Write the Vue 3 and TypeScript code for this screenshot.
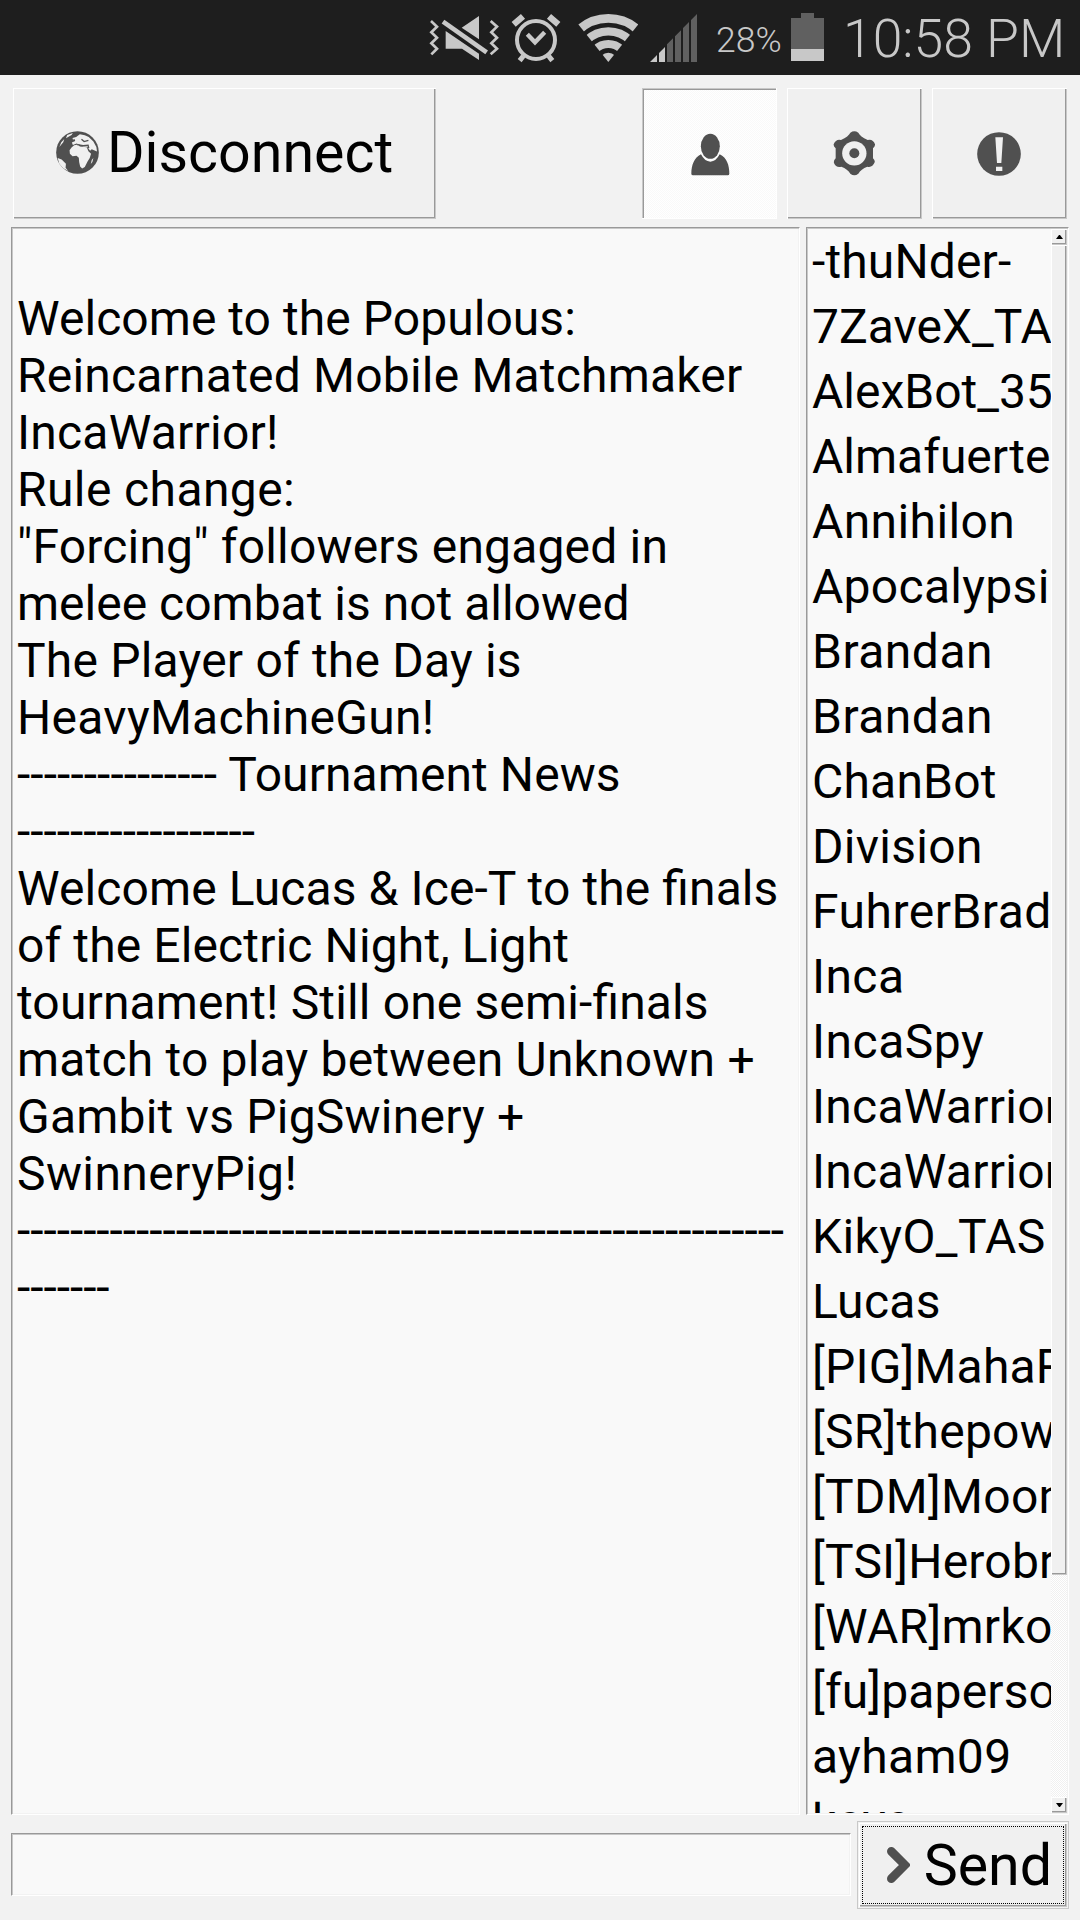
<script setup lang="ts">
interface Line {
  text: string
  spacing: number
}

const lines: Line[] = [
  { text: '\u00a0', spacing: 0 },
  { text: 'Welcome to the Populous:', spacing: 0.05 },
  { text: 'Reincarnated Mobile Matchmaker', spacing: 0.2 },
  { text: 'IncaWarrior!', spacing: 0.22 },
  { text: 'Rule change:', spacing: 0.4 },
  { text: '"Forcing" followers engaged in', spacing: 0.17 },
  { text: 'melee combat is not allowed', spacing: 0 },
  { text: 'The Player of the Day is', spacing: 0.2 },
  { text: 'HeavyMachineGun!', spacing: 0.3 },
  { text: '--------------- Tournament News', spacing: 0.08 },
  { text: '------------------', spacing: -0.04 },
  { text: 'Welcome Lucas & Ice-T to the finals', spacing: 0.1 },
  { text: 'of the Electric Night, Light', spacing: 0.12 },
  { text: 'tournament! Still one semi-finals', spacing: 0.14 },
  { text: 'match to play between Unknown +', spacing: 0.19 },
  { text: 'Gambit vs PigSwinery +', spacing: 0.22 },
  { text: 'SwinneryPig!', spacing: 0.4 },
  { text: '-'.repeat(58), spacing: -0.04 },
  { text: '-------', spacing: -0.04 },
]

const users: Line[] = [
  { text: '-thuNder-', spacing: 0.13 },
  { text: '7ZaveX_TAS', spacing: 0 },
  { text: 'AlexBot_35', spacing: 0 },
  { text: 'Almafuerte', spacing: 0 },
  { text: 'Annihilon', spacing: 0.4 },
  { text: 'Apocalypsis', spacing: 0.3 },
  { text: 'Brandan', spacing: 0.5 },
  { text: 'Brandan', spacing: 0.5 },
  { text: 'ChanBot', spacing: 0.2 },
  { text: 'Division', spacing: 0.3 },
  { text: 'FuhrerBrad', spacing: 0.5 },
  { text: 'Inca', spacing: 0.4 },
  { text: 'IncaSpy', spacing: 0.5 },
  { text: 'IncaWarrior', spacing: 0.25 },
  { text: 'IncaWarrior', spacing: 0.25 },
  { text: 'KikyO_TAS', spacing: 0.4 },
  { text: 'Lucas', spacing: 0.3 },
  { text: '[PIG]MahaR', spacing: 0.2 },
  { text: '[SR]thepower', spacing: 0.25 },
  { text: '[TDM]Moon', spacing: 0.3 },
  { text: '[TSI]Herobrine', spacing: 0.2 },
  { text: '[WAR]mrko', spacing: 0.3 },
  { text: '[fu]paperso', spacing: 0.15 },
  { text: 'ayham09', spacing: 0.35 },
  { text: 'kaya', spacing: 0.3 },
]
</script>

<template>
  <div class="screen">
    <header class="status">
      <svg class="mute" viewBox="24 30 216 165" width="72" height="55">
        <g fill="none" stroke="#c8c8c8" stroke-width="8">
          <path d="M33 63L51 80L34 97L51 113L34 130L51 146L34 163" />
          <path d="M212 63L231 80L214 97L231 113L214 130L231 146L212 163" />
        </g>
        <path d="M177 48V118L125 83ZM77 93L177 161V180L126 146H77Z" fill="#c8c8c8" />
        <path d="M69 65L200 157" stroke="#c8c8c8" stroke-width="14" />
      </svg>
      <svg class="alarm" viewBox="270 30 156 165" width="52" height="55">
        <g fill="none" stroke="#c8c8c8">
          <circle cx="348" cy="120" r="57" stroke-width="12" />
          <path d="M322 103L345 127L374 97" stroke-width="13" />
          <path d="M281 73L309 49M387 49L415 73" stroke-width="19" />
          <path d="M310 168L299 182M386 168L397 182" stroke-width="15" />
        </g>
      </svg>
      <svg class="wifi" viewBox="474 30 180 165" width="60" height="55">
        <clipPath id="wedge"><path d="M565 186L434 22H696Z" /></clipPath>
        <g clip-path="url(#wedge)" fill="none" stroke="#c8c8c8">
          <circle cx="565" cy="186" r="131" stroke-width="26" />
          <circle cx="565" cy="186" r="92" stroke-width="25" />
          <circle cx="565" cy="186" r="54" stroke-width="24" />
          <circle cx="565" cy="186" r="14" stroke-width="28" />
        </g>
      </svg>
      <svg class="signal" viewBox="687 30 147 165" width="49" height="55">
        <path d="M690 186L711 165V186ZM717 159L735 141V186H717Z" fill="#c8c8c8" />
        <path d="M741 133L759 115V186H741ZM765 109L783 91V186H765ZM789 84L807 66V186H789ZM813 60L831 42V186H813Z" fill="#606060" />
      </svg>
      <span class="percent">28%</span>
      <span class="battery"><i class="cap"></i><i class="cell"></i></span>
      <span class="clock">10:58 PM</span>
    </header>

    <nav class="toolbar">
      <button class="raised disconnect">
        <svg viewBox="0 0 130 130" width="43" height="43">
          <circle cx="65" cy="65" r="64.5" fill="#505050" />
          <g fill="#f0f0f0">
            <path d="M61 18L72 10L87 13L99 18L113 32L122 48L124 62L115 58L108 55L103 60L95 48L82 47L70 41L62 38L51 42L48 35L58 30L57 25L51 26L50 21Z" />
            <path d="M55 43L67 41L72 47L93 49L98 61L106 69L102 82L95 93L87 109L79 113L73 107L70 94L69 81L62 75L50 76L42 69L41 58L47 50Z" />
            <path d="M34 12L51 6L47 12L30 22ZM16 34L25 24L22 34L10 48ZM5 82L17 86L30 99L29 111L37 121L21 112L10 99Z" />
            <path d="M108 88L113 82L110 94L105 100Z" />
          </g>
          <path d="M64 41L82 44L97 43L99 52M77 25L85 32L98 28" fill="none" stroke="#505050" stroke-width="4" />
        </svg>
        <span>Disconnect</span>
      </button>
      <div class="group">
        <button class="pressed square">
          <svg viewBox="0 0 133 133" width="44.33" height="44.33">
            <ellipse cx="67" cy="46" rx="28.5" ry="37.5" fill="#505050" />
            <path d="M39 70Q50 92 67 92T95 70C117 80 124 104 124 128Q124 133 119 133H15Q10 133 10 128C10 104 18 80 39 70Z" fill="#505050" />
          </svg>
        </button>
        <button class="raised square">
          <svg viewBox="0 0 134 134" width="44.67" height="44.67">
            <path d="M55 5Q67-3 79 5Q84 16 107 27Q123 23 129 40Q130 46 123 52V82Q130 90 128 94Q121 111 106 107Q87 114 79 128Q67 138 55 128Q47 114 28 107Q12 111 6 96Q4 89 11 82V52Q4 46 5 40Q12 23 27 27Q50 16 55 5Z" fill="#505050" />
            <circle cx="67" cy="67" r="36.500" fill="#f0f0f0" />
            <circle cx="67" cy="67" r="15" fill="#505050" />
          </svg>
        </button>
        <button class="raised square alert">
          <svg viewBox="0 0 132 132" width="44" height="44">
            <circle cx="66" cy="66" r="65.500" fill="#505050" />
            <path d="M55 16H78L73 93H60ZM57 104H76V117H57Z" fill="#f0f0f0" />
          </svg>
        </button>
      </div>
    </nav>

    <main class="body">
      <section class="sunken chat">
        <div v-for="(line, i) in lines" :key="i" class="line" :style="{ letterSpacing: line.spacing + 'px' }">{{ line.text }}</div>
      </section>
      <section class="sunken users">
        <ul class="names">
          <li v-for="(user, i) in users" :key="i" :style="{ letterSpacing: user.spacing + 'px' }">{{ user.text }}</li>
        </ul>
        <div class="scrollbar">
          <div class="raised arrow"><svg viewBox="0 0 7 4" width="7" height="4"><path d="M0 4L3 0H4L7 4Z" /></svg></div>
          <div class="raised thumb"></div>
          <div class="track"></div>
          <div class="raised arrow"><svg viewBox="0 0 7 4" width="7" height="4"><path d="M0 0L3 4H4L7 0Z" /></svg></div>
        </div>
      </section>
    </main>

    <footer class="compose">
      <div class="sunken entry"></div>
      <button class="send">
        <span class="raised face">
          <span class="focus">
            <svg viewBox="0 0 68 108" width="22.67" height="36"><path d="M13 13L54 54L13 95" fill="none" stroke="#505050" stroke-width="26" stroke-linecap="round" /></svg>
            <span>Send</span>
          </span>
        </span>
      </button>
    </footer>
  </div>
</template>

<style>
body {
  margin: 0;
}
</style>

<style scoped>
.screen {
  width: 1080px;
  height: 1920px;
  box-sizing: border-box;
  overflow: hidden;
  display: flex;
  flex-direction: column;
  background: #f2f2f2;
  color: #000;
  font-family: Roboto, sans-serif;
  font-size: 48px;
}
.screen * {
  box-sizing: border-box;
}
svg {
  display: block;
  flex: none;
}
button {
  padding: 0;
  border: 0;
  border-radius: 0;
  font: inherit;
  color: inherit;
}
.status {
  height: 75px;
  flex: none;
  display: flex;
  align-items: flex-start;
  padding: 10px 0 0 428px;
  background: #1e1e1e;
  color: #c8c8c8;
  white-space: nowrap;
}
.alarm {
  margin-left: 10px;
}
.wifi {
  margin-left: 16px;
}
.signal {
  margin-left: 11px;
}
.percent {
  width: 75px;
  margin-left: 18px;
  font-size: 35.5px;
  font-weight: 350;
  line-height: 60px;
}
.battery {
  width: 33px;
  margin-top: 3px;
  display: flex;
  flex-direction: column;
  align-items: center;
}
.cap {
  width: 13px;
  height: 5px;
  background: #606060;
}
.cell {
  width: 33px;
  height: 43px;
  background: linear-gradient(#606060 31px, #c8c8c8 31px);
}
.clock {
  margin-left: 19px;
  font-size: 53.5px;
  font-weight: 300;
  line-height: 57px;
}
.raised {
  background: #f0f0f0;
  box-shadow: inset 1px 1px #fff, inset -1px -1px #c8c8c8, inset -2px -2px #999;
}
.pressed {
  background: repeating-conic-gradient(#fff 0 25%, #f9f9f9 0 50%) 0 0 / 2px 2px;
  box-shadow: inset -1px -1px #fff, inset 1px 1px #c8c8c8, inset 2px 2px #999;
}
.sunken {
  border: 1px solid;
  border-color: #999 #fff #fff #999;
  background: #f9f9f9;
  box-shadow: inset 1px 1px #c8c8c8, inset -1px -1px #f2f2f2;
}
.toolbar {
  flex: none;
  height: 152px;
  display: flex;
  justify-content: space-between;
  padding: 13px 13px 8px;
}
.disconnect {
  width: 423px;
  display: flex;
  align-items: center;
  padding-left: 43px;
  padding-bottom: 2px;
  font-size: 57.3px;
}
.disconnect span {
  margin-left: 8px;
}
.group {
  display: flex;
  gap: 10px;
}
.square {
  width: 135px;
  display: flex;
  align-items: center;
  justify-content: center;
}
.square.pressed {
  padding-left: 2px;
}
.square.alert {
  padding-right: 2px;
}
.body {
  flex: none;
  height: 1588px;
  display: flex;
  gap: 6px;
  padding: 0 11px;
}
.chat {
  width: 789px;
  padding: 5px 0 0 5px;
}
.line {
  height: 57px;
  line-height: 57px;
  white-space: pre;
  font-feature-settings: "liga" 1;
}
.users {
  width: 263px;
  display: flex;
  padding: 1px;
}
.names {
  width: 243px;
  margin: 0;
  padding: 0 0 0 4px;
  overflow: hidden;
  list-style: none;
  line-height: 65px;
  white-space: nowrap;
}
.names li {
  height: 65px;
}
.scrollbar {
  width: 16px;
  display: flex;
  flex-direction: column;
}
.arrow {
  height: 16px;
  display: flex;
  align-items: center;
  justify-content: center;
}
.thumb {
  height: 1330px;
}
.track {
  flex: 1;
  background: repeating-conic-gradient(#fff 0 25%, #f0f0f0 0 50%) 0 0 / 2px 2px;
}
.compose {
  flex: none;
  height: 105px;
  display: flex;
  gap: 6px;
  padding: 6px 11px 11px;
}
.entry {
  width: 840px;
  height: 63px;
  margin-top: 12px;
}
.send {
  width: 212px;
  height: 88px;
  padding: 1px;
  display: flex;
  border: 1px solid #c8c8c8;
  background: #f2f2f2;
}
.face {
  flex: 1;
  display: flex;
  padding: 3px;
}
.focus {
  flex: 1;
  display: flex;
  align-items: center;
  padding-left: 24px;
  border: 1px dotted #000;
  font-size: 57.3px;
}
.focus span {
  margin-left: 14px;
}
</style>
